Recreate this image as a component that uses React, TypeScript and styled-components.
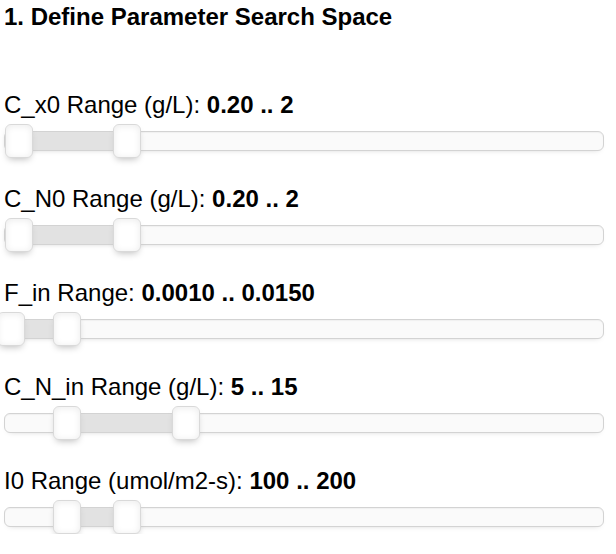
import React from 'react';
import styled, { createGlobalStyle } from 'styled-components';

const GlobalStyle = createGlobalStyle`
  html, body {
    margin: 0;
    padding: 0;
    background: #fff;
  }
  body {
    font-family: "Liberation Sans", Arial, Helvetica, sans-serif;
    color: #000;
  }
`;

const Page = styled.div`
  padding: 3px 12px 0 4px;
  width: 616px;
  box-sizing: border-box;
`;

const Heading = styled.h3`
  margin: 0 0 60px 0;
  font-size: 24px;
  line-height: 28px;
  font-weight: bold;
`;

const List = styled.div`
  display: flex;
  flex-direction: column;
  gap: 27px;
`;

const Row = styled.div`
  display: flex;
  flex-direction: column;
  gap: 5px;
`;

const Label = styled.div`
  font-size: 24px;
  line-height: 28px;

  b {
    font-weight: bold;
  }
`;

const SliderArea = styled.div`
  height: 34px;
  display: flex;
  align-items: center;
`;

const Track = styled.div`
  position: relative;
  width: 100%;
  height: 20px;
  box-sizing: border-box;
  border: 1px solid #d3d3d3;
  border-radius: 6px;
  background: #fafafa;
  box-shadow: inset 0 1px 1px #f0f0f0, 0 3px 6px -5px #bbb;
`;

const Connect = styled.div`
  position: absolute;
  top: 0;
  bottom: 0;
  background: #e2e2e2;
`;

const Handle = styled.div`
  position: absolute;
  top: -8px;
  width: 28px;
  height: 34px;
  margin-left: -12px;
  box-sizing: border-box;
  border: 1px solid #d9d9d9;
  border-radius: 6px;
  background: #fff;
  box-shadow: inset 0 0 1px #fff, inset 0 1px 7px #ebebeb, 0 4px 7px -3px #bbb;
`;

interface RangeProps {
  min: number;
  max: number;
  from: number;
  to: number;
}

const RangeSlider: React.FC<RangeProps> = ({ min, max, from, to }) => {
  const a = ((from - min) / (max - min)) * 100;
  const b = ((to - min) / (max - min)) * 100;
  return (
    <SliderArea>
      <Track>
        <Connect style={{ left: `${a}%`, width: `${b - a}%` }} />
        <Handle style={{ left: `${a}%` }} />
        <Handle style={{ left: `${b}%` }} />
      </Track>
    </SliderArea>
  );
};

const params = [
  { name: 'C_x0 Range (g/L):', text: '0.20 .. 2', min: 0, max: 10, from: 0.2, to: 2 },
  { name: 'C_N0 Range (g/L):', text: '0.20 .. 2', min: 0, max: 10, from: 0.2, to: 2 },
  { name: 'F_in Range:', text: '0.0010 .. 0.0150', min: 0, max: 0.15, from: 0.001, to: 0.015 },
  { name: 'C_N_in Range (g/L):', text: '5 .. 15', min: 0, max: 50, from: 5, to: 15 },
  { name: 'I0 Range (umol/m2-s):', text: '100 .. 200', min: 0, max: 1000, from: 100, to: 200 },
];

const App = () => {
  return (
    <Page>
      <GlobalStyle />
      <Heading>1. Define Parameter Search Space</Heading>
      <List>
        {params.map((p) => (
          <Row key={p.name}>
            <Label>
              {p.name} <b>{p.text}</b>
            </Label>
            <RangeSlider min={p.min} max={p.max} from={p.from} to={p.to} />
          </Row>
        ))}
      </List>
    </Page>
  );
};

export default App;
